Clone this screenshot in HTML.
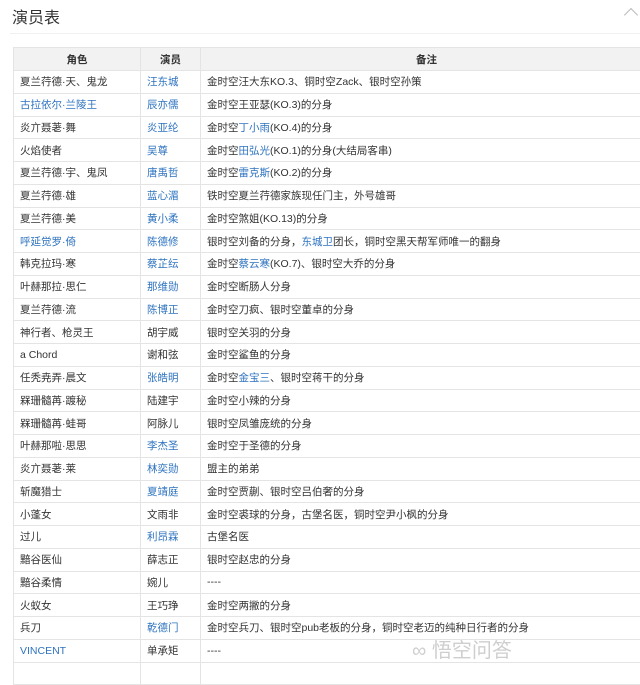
<!DOCTYPE html><html><head><meta charset="utf-8"><style>
body{margin:0;background:#fff;width:640px;height:666px;overflow:hidden;font-family:"Liberation Sans","Noto Sans CJK SC",sans-serif;color:#333}
h1{position:absolute;left:12px;top:4px;margin:0;font-size:16px;font-weight:normal;color:#333}
.hr{position:absolute;left:10px;right:0;top:33px;border-top:1px solid #f0f0f0}
.arr{position:absolute;left:626px;top:10px;width:9px;height:9px;border-left:1px solid #bbb;border-top:1px solid #bbb;transform:rotate(45deg)}
table{position:absolute;left:13px;top:47px;width:640px;border-collapse:collapse;font-size:10.5px;table-layout:fixed}
td,th{border:1px solid #e4e4e4;height:21.75px;padding:0 0 0 6px;white-space:nowrap;overflow:hidden}
th{background:#f2f2f2;font-weight:bold;text-align:center;height:22px;padding:0}
a{color:#2e73c0;text-decoration:none}
.wm{position:absolute;left:412px;top:634px;font-size:20px;color:rgba(190,190,190,.75)}
</style></head><body>
<h1>演员表</h1><div class="hr"></div><div class="arr"></div>
<table>
<colgroup><col style="width:127px"><col style="width:60px"><col></colgroup>
<tr><th>角色</th><th>演员</th><th>备注</th></tr>
<tr><td>夏兰荇德·天、鬼龙</td><td><a>汪东城</a></td><td>金时空汪大东KO.3、铜时空Zack、银时空孙策</td></tr>
<tr><td><a>古拉依尔·兰陵王</a></td><td><a>辰亦儒</a></td><td>金时空王亚瑟(KO.3)的分身</td></tr>
<tr><td>炎亣聂荖·舞</td><td><a>炎亚纶</a></td><td>金时空<a>丁小雨</a>(KO.4)的分身</td></tr>
<tr><td>火焰使者</td><td><a>吴尊</a></td><td>金时空<a>田弘光</a>(KO.1)的分身(大结局客串)</td></tr>
<tr><td>夏兰荇德·宇、鬼凤</td><td><a>唐禹哲</a></td><td>金时空<a>雷克斯</a>(KO.2)的分身</td></tr>
<tr><td>夏兰荇德·雄</td><td><a>蓝心湄</a></td><td>铁时空夏兰荇德家族现任门主，外号雄哥</td></tr>
<tr><td>夏兰荇德·美</td><td><a>黄小柔</a></td><td>金时空煞姐(KO.13)的分身</td></tr>
<tr><td><a>呼延觉罗·倚</a></td><td><a>陈德修</a></td><td>银时空刘备的分身，<a>东城卫</a>团长，铜时空黑天帮军师唯一的翻身</td></tr>
<tr><td>韩克拉玛·寒</td><td><a>蔡芷纭</a></td><td>金时空<a>蔡云寒</a>(KO.7)、银时空大乔的分身</td></tr>
<tr><td>叶赫那拉·思仁</td><td><a>那维勋</a></td><td>金时空断肠人分身</td></tr>
<tr><td>夏兰荇德·流</td><td><a>陈博正</a></td><td>金时空刀疯、银时空董卓的分身</td></tr>
<tr><td>神行者、枪灵王</td><td>胡宇威</td><td>银时空关羽的分身</td></tr>
<tr><td>a Chord</td><td>谢和弦</td><td>金时空鲨鱼的分身</td></tr>
<tr><td>任秃尭弄·晨文</td><td><a>张皓明</a></td><td>金时空<a>金宝三</a>、银时空蒋干的分身</td></tr>
<tr><td>槑珊髓苒·踱秘</td><td>陆建宇</td><td>金时空小辣的分身</td></tr>
<tr><td>槑珊髓苒·蛙哥</td><td>阿脉儿</td><td>银时空凤雏庞统的分身</td></tr>
<tr><td>叶赫那啦·思思</td><td><a>李杰圣</a></td><td>金时空于圣德的分身</td></tr>
<tr><td>炎亣聂荖·莱</td><td><a>林奕勋</a></td><td>盟主的弟弟</td></tr>
<tr><td>斩魔猎士</td><td><a>夏靖庭</a></td><td>金时空贾蒯、银时空吕伯奢的分身</td></tr>
<tr><td>小蓬女</td><td>文雨非</td><td>金时空裘球的分身，古堡名医，铜时空尹小枫的分身</td></tr>
<tr><td>过儿</td><td><a>利昂霖</a></td><td>古堡名医</td></tr>
<tr><td>黯谷医仙</td><td>薛志正</td><td>银时空赵忠的分身</td></tr>
<tr><td>黯谷柔情</td><td>婉儿</td><td>----</td></tr>
<tr><td>火蚁女</td><td>王巧琤</td><td>金时空两撇的分身</td></tr>
<tr><td>兵刀</td><td><a>乾德门</a></td><td>金时空兵刀、银时空pub老板的分身，铜时空老迈的纯种日行者的分身</td></tr>
<tr><td><a>VINCENT</a></td><td>单承矩</td><td>----</td></tr>
<tr><td>&nbsp;</td><td></td><td></td></tr>
</table>
<div class="wm">∞ 悟空问答</div>
</body></html>
